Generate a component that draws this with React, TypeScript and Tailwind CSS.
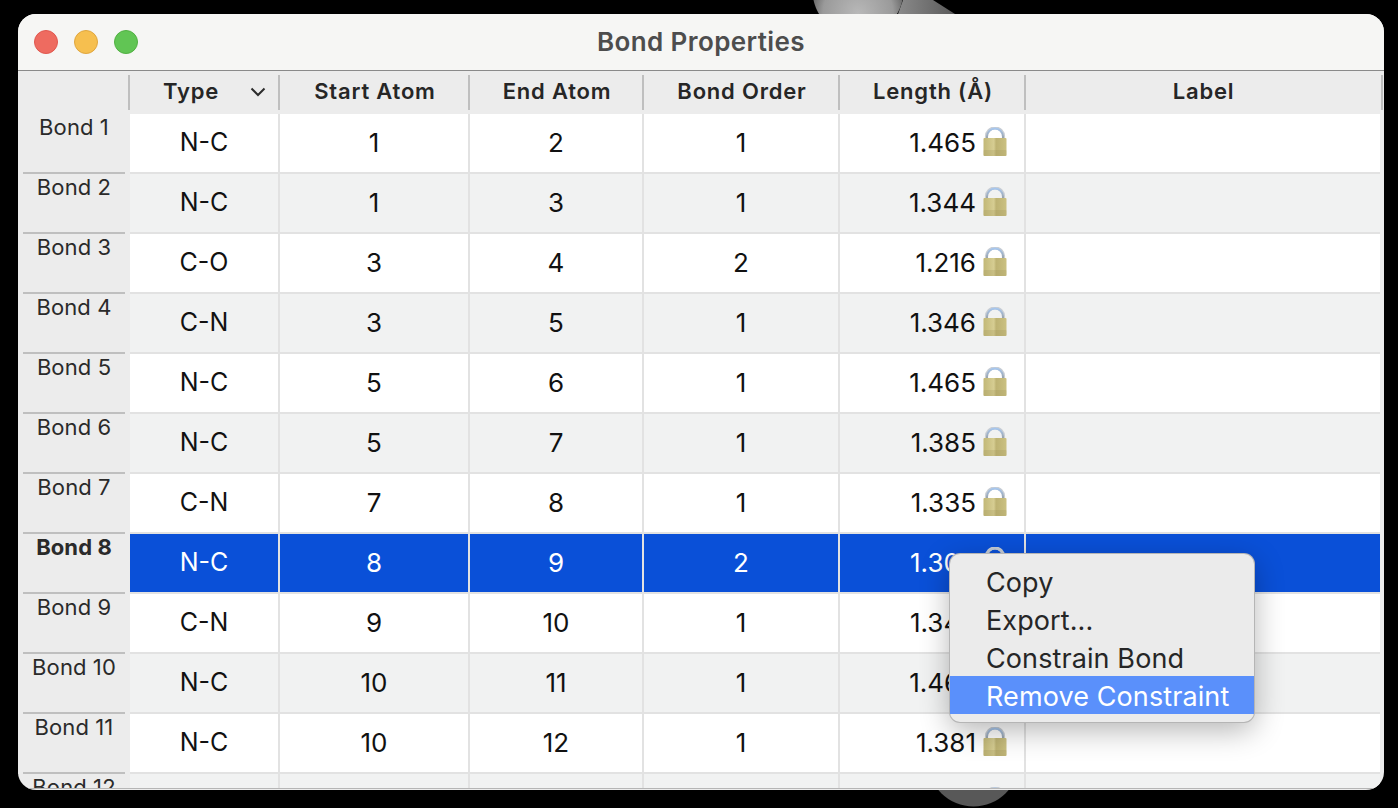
import React from 'react'

const rows = [
  ['N-C', '1', '2', '1', '1.465'],
  ['N-C', '1', '3', '1', '1.344'],
  ['C-O', '3', '4', '2', '1.216'],
  ['C-N', '3', '5', '1', '1.346'],
  ['N-C', '5', '6', '1', '1.465'],
  ['N-C', '5', '7', '1', '1.385'],
  ['C-N', '7', '8', '1', '1.335'],
  ['N-C', '8', '9', '2', '1.309'],
  ['C-N', '9', '10', '1', '1.345'],
  ['N-C', '10', '11', '1', '1.465'],
  ['N-C', '10', '12', '1', '1.381'],
]

const Lock = ({ selected }: { selected?: boolean }) => (
  <svg width="24" height="30" viewBox="0 0 24 30" className="shrink-0">
    <defs>
      <linearGradient id="shackle" x1="0" y1="0" x2="0" y2="1">
        <stop offset="0" stopColor="#a6c6ee" />
        <stop offset="1" stopColor="#9aa0a6" />
      </linearGradient>
      <linearGradient id="lockbody" x1="0" y1="0" x2="1" y2="0">
        <stop offset="0" stopColor="#c2b877" />
        <stop offset="0.45" stopColor="#d6cd92" />
        <stop offset="0.55" stopColor="#bdb272" />
        <stop offset="1" stopColor="#cbc182" />
      </linearGradient>
    </defs>
    <path d="M3.5 12V9.5a8.5 8.5 0 0 1 17 0V12" fill="none" stroke="#c9ced4" strokeWidth="3.2" />
    <path d="M4 12V9.5a8 8 0 0 1 16 0V12" fill="none" stroke={selected ? '#c3cbd6' : 'url(#shackle)'} strokeWidth="2" />
    <rect x="0.5" y="11" width="23" height="18" rx="1" fill="url(#lockbody)" />
    <rect x="0.5" y="23" width="23" height="6" rx="1" fill="#a0945a" opacity="0.25" />
  </svg>
)

const cols = 'grid grid-cols-[112px_150px_190px_174px_196px_186px_354px]'

export default function App() {
  return (
    <div className="relative h-[808px] w-[1398px] overflow-hidden bg-black font-['Inter',sans-serif]">
      {/* molecule behind the window */}
      <svg className="absolute left-0 top-0" width="1398" height="808" viewBox="0 0 1398 808">
        <defs>
          <radialGradient id="ball" cx="0.5" cy="0.75" r="0.55">
            <stop offset="0" stopColor="#b8b8b8" />
            <stop offset="0.7" stopColor="#9a9a9a" />
            <stop offset="1" stopColor="#5c5c5c" />
          </radialGradient>
          <linearGradient id="bond" x1="0" y1="0" x2="1" y2="0">
            <stop offset="0" stopColor="#8a8a8a" />
            <stop offset="1" stopColor="#5a5a5a" />
          </linearGradient>
        </defs>
        <circle cx="858" cy="-9.5" r="45.5" fill="url(#ball)" />
        <path d="M898 14 L903 0 L933 0 L955 14Z" fill="url(#bond)" />
        <circle cx="973.5" cy="761" r="45.5" fill="#585858" />
      </svg>

      <div className="relative ml-[18px] mt-[14px] flex h-[776px] w-[1366px] flex-col overflow-hidden rounded-[18px] bg-[#ececec]">
        {/* title bar */}
        <div className="relative flex h-[57px] shrink-0 items-center justify-center border-b border-[#8a8a8a] bg-[#f6f6f4] pb-[2px]">
          <div className="absolute left-4 top-4 flex gap-4">
            <div className="h-6 w-6 rounded-full border border-[#e0584f] bg-[#ee6b60]" />
            <div className="h-6 w-6 rounded-full border border-[#dfa63f] bg-[#f6bf4f]" />
            <div className="h-6 w-6 rounded-full border border-[#52b043] bg-[#61c554]" />
          </div>
          <span className="text-[26px] font-semibold tracking-[0.4px] text-[#4d4d4d]">Bond Properties</span>
        </div>

        {/* column headers */}
        <div className="grid h-[43px] shrink-0 grid-cols-[112px_150px_190px_174px_196px_186px_357px] text-[22px] font-semibold tracking-[0.8px] text-[#262626]">
          <div className="mb-[5px] mt-1 border-r-2 border-[#bfbfbf]" />
          {['Type', 'Start Atom', 'End Atom', 'Bond Order', 'Length (Å)', 'Label'].map((h, i) => (
            <div key={h} className={`relative mb-[5px] mt-1 flex items-center justify-center border-r-2 border-[#bfbfbf] pb-[2px] ${i === 5 ? '' : 'pl-[2px]'}`}>
              <span className={i === 0 ? 'mr-[28px]' : ''}>{h}</span>
              {i === 0 && (
                <svg width="16" height="10" viewBox="0 0 16 10" className="absolute right-[12px] top-[12px]">
                  <path d="M1.5 1.5 8 8l6.5-6.5" fill="none" stroke="#2c2c2c" strokeWidth="2" />
                </svg>
              )}
            </div>
          ))}
        </div>

        {/* rows */}
        <div className="flex flex-col">
          {rows.map((r, i) => {
            const selected = i === 7
            const stripe = selected ? 'bg-[#0a50d8] text-white' : i % 2 === 0 ? 'bg-white text-[#111]' : 'bg-[#f1f2f2] text-[#111]'
            return (
              <div key={i} className={`${cols} h-[60px]`}>
                <div className="flex h-[60px] flex-col justify-between bg-[#ececec]">
                  <div className={`flex justify-center text-[22px] leading-[26px] tracking-[0.1px] text-[#2a2a2a] ${selected ? 'font-bold' : ''}`}>
                    <span>Bond {i + 1}</span>
                  </div>
                  <div className="mx-[5px] h-[2px] bg-[#bfbfbf]" />
                </div>
                {r.map((c, j) => (
                  <div
                    key={j}
                    className={`flex h-[60px] items-center border-b-2 border-r-2 border-b-[#e2e2e2] border-r-[#e2e2e2] ${j === 0 ? 'text-[25px]' : 'pb-[2px] text-[26px]'} ${stripe} ${j === 4 ? 'justify-end gap-[7px] pr-[17px]' : 'justify-center'}`}
                  >
                    {c}
                    {j === 4 && <Lock selected={selected} />}
                  </div>
                ))}
                <div className={`h-[60px] border-b-2 border-b-[#e2e2e2] ${stripe}`} />
              </div>
            )
          })}
          {/* partly scrolled row */}
          <div className={`${cols} h-[14px] overflow-hidden`}>
            <div className="flex justify-center text-[22px] leading-[26px] tracking-[0.1px] text-[#2a2a2a]">
              <span>Bond 12</span>
            </div>
            <div className="border-r-2 border-[#e2e2e2] bg-[#f1f2f2]" />
            <div className="border-r-2 border-[#e2e2e2] bg-[#f1f2f2]" />
            <div className="border-r-2 border-[#e2e2e2] bg-[#f1f2f2]" />
            <div className="border-r-2 border-[#e2e2e2] bg-[#f1f2f2]" />
            <div className="flex justify-end border-r-2 border-[#e2e2e2] bg-[#f1f2f2] pr-[17px] pt-[13px]">
              <Lock />
            </div>
            <div className="bg-[#f1f2f2]" />
          </div>
          <div className="h-px bg-[#b5b5b5]" />
        </div>

        {/* context menu */}
        <div className="absolute left-[932px] top-[540px] w-[304px] rounded-[10px] bg-[#ebebeb] pb-2 pt-2 text-[27px] leading-[38px] tracking-[0.1px] text-[#262626] shadow-[0_8px_30px_rgba(0,0,0,0.3)] ring-1 ring-[#b5b5b5]">
          <div className="h-[38px] pl-[36px] pt-[2px]">Copy</div>
          <div className="h-[38px] pl-[36px] pt-[2px]">Export...</div>
          <div className="h-[38px] pl-[36px] pt-[2px]">Constrain Bond</div>
          <div className="h-[38px] bg-[#5a90fb] pl-[36px] pt-[2px] text-white">Remove Constraint</div>
        </div>
      </div>
    </div>
  )
}
